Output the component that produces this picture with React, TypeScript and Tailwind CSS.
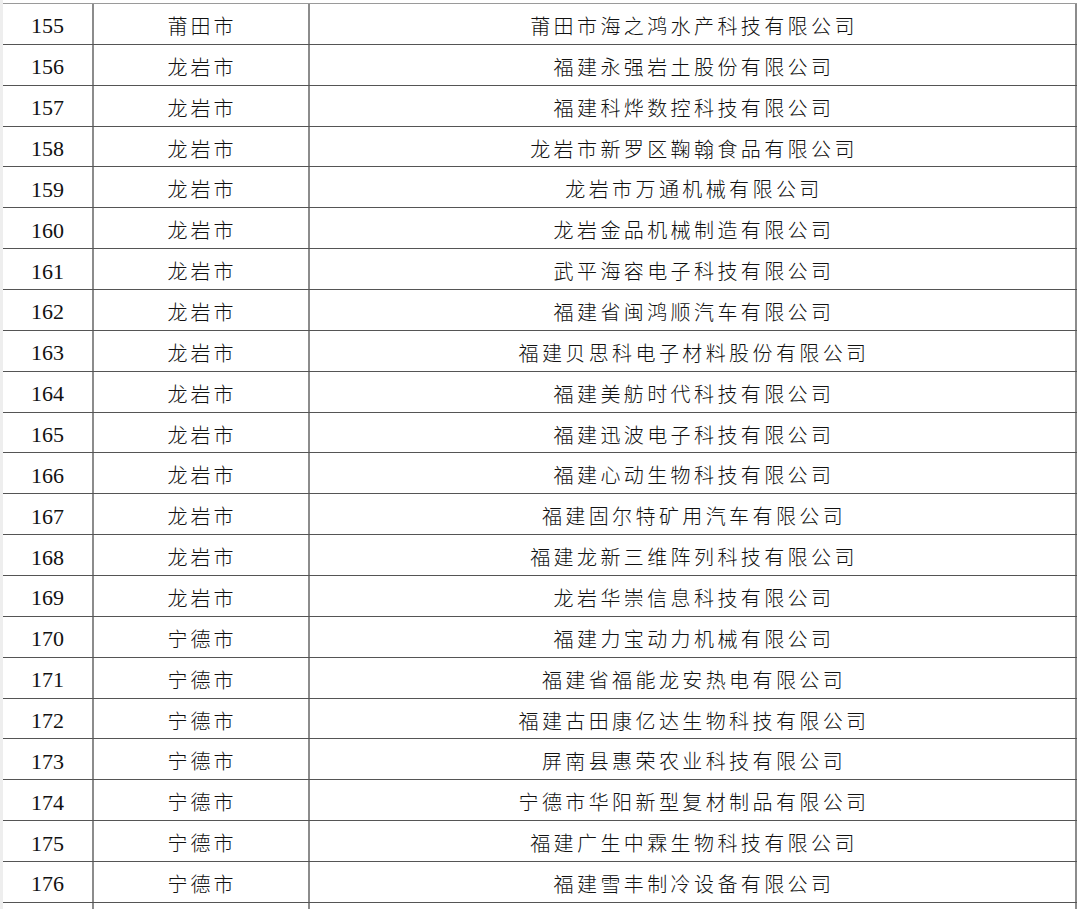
const rows: [number, string, string][] = [
  [155, "莆田市", "莆田市海之鸿水产科技有限公司"],
  [156, "龙岩市", "福建永强岩土股份有限公司"],
  [157, "龙岩市", "福建科烨数控科技有限公司"],
  [158, "龙岩市", "龙岩市新罗区鞠翰食品有限公司"],
  [159, "龙岩市", "龙岩市万通机械有限公司"],
  [160, "龙岩市", "龙岩金品机械制造有限公司"],
  [161, "龙岩市", "武平海容电子科技有限公司"],
  [162, "龙岩市", "福建省闽鸿顺汽车有限公司"],
  [163, "龙岩市", "福建贝思科电子材料股份有限公司"],
  [164, "龙岩市", "福建美舫时代科技有限公司"],
  [165, "龙岩市", "福建迅波电子科技有限公司"],
  [166, "龙岩市", "福建心动生物科技有限公司"],
  [167, "龙岩市", "福建固尔特矿用汽车有限公司"],
  [168, "龙岩市", "福建龙新三维阵列科技有限公司"],
  [169, "龙岩市", "龙岩华崇信息科技有限公司"],
  [170, "宁德市", "福建力宝动力机械有限公司"],
  [171, "宁德市", "福建省福能龙安热电有限公司"],
  [172, "宁德市", "福建古田康亿达生物科技有限公司"],
  [173, "宁德市", "屏南县惠荣农业科技有限公司"],
  [174, "宁德市", "宁德市华阳新型复材制品有限公司"],
  [175, "宁德市", "福建广生中霖生物科技有限公司"],
  [176, "宁德市", "福建雪丰制冷设备有限公司"],
]

export default function App() {
  return (
    <div className="flex h-[909px] w-[1080px] overflow-hidden bg-white">
      <div className="w-[3px] shrink-0 bg-[#eeeeee]" />
      <div className="flex w-[1074px] flex-col pt-[3px]">
        <div className="h-[1px] w-full bg-[#9a9a9a]" />
        {rows.map(([no, city, company]) => (
          <div
            key={no}
            className="grid h-[40.86px] shrink-0 grid-cols-[91px_216px_767px] border-b border-[#555555] text-[#111111]"
          >
            <div className="flex items-center justify-center border-r-2 border-[#8c8c8c] pt-[4px] font-['Liberation_Serif',serif] text-[22px]">
              {no}
            </div>
            <div className="flex items-center justify-center border-r-2 border-[#8c8c8c] pl-[2px] pt-[4px] font-['Noto_Sans_CJK_SC',sans-serif] text-[20px] font-light tracking-[3px]">
              {city}
            </div>
            <div className="flex items-center justify-center border-r-2 border-[#8c8c8c] pl-[3px] pt-[4px] font-['Noto_Sans_CJK_SC',sans-serif] text-[20px] font-light tracking-[3.4px]">
              {company}
            </div>
          </div>
        ))}
        <div className="grid flex-1 grid-cols-[91px_216px_767px]">
          <div className="border-r-2 border-[#8c8c8c]" />
          <div className="border-r-2 border-[#8c8c8c]" />
          <div className="border-r-2 border-[#8c8c8c]" />
        </div>
      </div>
    </div>
  )
}
